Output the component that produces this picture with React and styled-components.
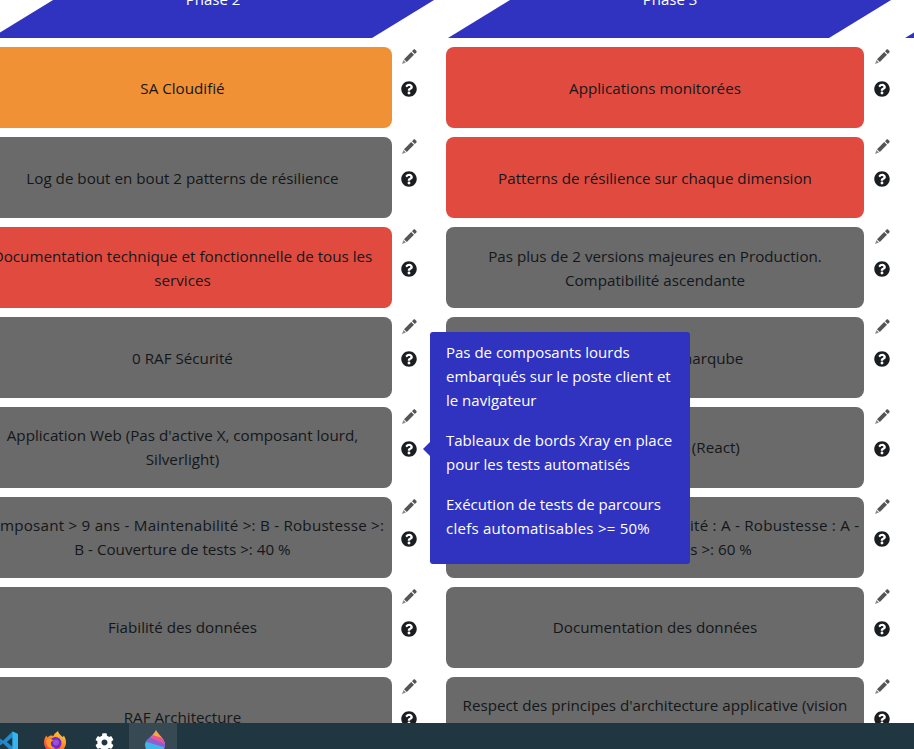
import React from "react";
import styled, { createGlobalStyle } from "styled-components";
import { FaQuestionCircle, FaCog } from "react-icons/fa";

const GlobalStyle = createGlobalStyle`
  html, body {
    margin: 0;
    padding: 0;
    background: #fff;
    font-family: "Open Sans", "Noto Sans", sans-serif;
    overflow: hidden;
  }
`;

const Page = styled.div`
  height: 100vh;
  display: flex;
  flex-direction: column;
  overflow: hidden;
`;

const Viewport = styled.div`
  position: relative;
  flex: 1;
  min-height: 0;
  overflow: hidden;
`;

const Board = styled.div`
  margin-top: -22px;
`;

const PhaseRow = styled.div`
  display: flex;
  margin-left: -9px;
  width: 1400px;
`;

const Phase = styled.div`
  position: relative;
  flex: 0 0 457px;
  height: 60px;
  box-sizing: border-box;
  padding: 9px 13px 0 0;
  text-align: center;
  color: #fff;
  font-size: 15px;
  line-height: 24px;

  &::before {
    content: "";
    position: absolute;
    top: 0;
    left: 0;
    width: 479px;
    height: 60px;
    background: #3033c0;
    clip-path: polygon(98px 0, 479px 0, 381px 100%, 0 100%);
  }
`;

const PhaseLabel = styled.span`
  position: relative;
`;

const Columns = styled.div`
  display: flex;
  margin: 9.4px 0 0 -26.5px;
  width: 1000px;
`;

const Column = styled.div`
  flex: 0 0 472.5px;
  display: flex;
  flex-direction: column;
  gap: 9px;
`;

const Row = styled.div`
  display: flex;
`;

const colors = {
  grey: "#6a6a6a",
  orange: "#f09135",
  red: "#e14b3f",
};

const Card = styled.div`
  flex: 0 0 418px;
  height: 80.9px;
  border-radius: 8px;
  background: ${(p) => colors[p.$tone]};
  color: #14171a;
  font-size: 15.2px;
  line-height: 24px;
  display: flex;
  flex-direction: column;
  align-items: center;
  justify-content: center;
  overflow: hidden;
`;

const Line = styled.span`
  display: block;
  white-space: nowrap;
  letter-spacing: ${(p) => p.$spread}px;
`;

const Actions = styled.div`
  margin-left: 9.5px;
  width: 16px;
  display: flex;
  flex-direction: column;
  align-items: center;
  padding-top: 2px;
  gap: 16px;
`;

const EditSvg = styled.svg`
  width: 16px;
  height: 16px;
  fill: #555;
`;

const HelpIcon = styled(FaQuestionCircle)`
  width: 16px;
  height: 16px;
  color: #1b1e21;
`;

const Tooltip = styled.div`
  position: absolute;
  top: 332px;
  left: 430px;
  width: 260px;
  box-sizing: border-box;
  padding: 8px 16px;
  border-radius: 3px;
  background: #3033c0;
  color: #fff;
  font-size: 15px;
  line-height: 24px;

  &::before {
    content: "";
    position: absolute;
    left: -7px;
    top: 110px;
    border-style: solid;
    border-width: 7px 7px 7px 0;
    border-color: transparent #3033c0 transparent transparent;
  }
`;

const TipText = styled.p`
  margin: 0 0 16px;
`;

const Taskbar = styled.div`
  flex: 0 0 26px;
  display: flex;
  background: #203640;
  overflow: hidden;
`;

const Tile = styled.div`
  flex: 0 0 48px;
  height: 26px;
  display: flex;
  padding: 7px 0 0 ${(p) => p.$inset}px;
  box-sizing: border-box;
  background: ${(p) => (p.$active ? "#374a54" : "transparent")};
  margin-left: ${(p) => (p.$first ? "-15px" : "0")};
`;

const GearIcon = styled(FaCog)`
  width: 19px;
  height: 19px;
  margin-top: 3px;
  color: #fff;
`;

const phases = ["Phase 2", "Phase 3", "Phase 4"];

const left = [
  { tone: "orange", lines: ["SA Cloudifié"] },
  { tone: "grey", lines: ["Log de bout en bout 2 patterns de résilience"] },
  { tone: "red", lines: ["Documentation technique et fonctionnelle de tous les", "services"] },
  { tone: "grey", lines: ["0 RAF Sécurité"] },
  { tone: "grey", lines: ["Application Web (Pas d'active X, composant lourd,", "Silverlight)"] },
  { tone: "grey", lines: ["Composant > 9 ans - Maintenabilité >: B - Robustesse >:", "B - Couverture de tests >: 40 %"] },
  { tone: "grey", lines: ["Fiabilité des données"] },
  { tone: "grey", lines: ["RAF Architecture"] },
];

const right = [
  { tone: "red", lines: ["Applications monitorées"] },
  { tone: "red", lines: ["Patterns de résilience sur chaque dimension"] },
  { tone: "grey", lines: ["Pas plus de 2 versions majeures en Production.", "Compatibilité ascendante"] },
  { tone: "grey", lines: ["Quality Gates Sonarqube"] },
  { tone: "grey", lines: ["Socle Web à jour (React)"] },
  { tone: "grey", lines: ["Composant > 9 ans - Maintenabilité : A - Robustesse : A -", "Couverture de tests >: 60 %"] },
  { tone: "grey", lines: ["Documentation des données"] },
  { tone: "grey", lines: ["Respect des principes d'architecture applicative (vision", "transverse)"] },
];

const tips = [
  ["Pas de composants lourds", "embarqués sur le poste client et", "le navigateur"],
  ["Tableaux de bords Xray en place", "pour les tests automatisés"],
  ["Exécution de tests de parcours", "clefs automatisables >= 50%"],
];

function spreadOf(line) {
  if (line.includes(">=")) return 0.25;
  if (line.includes(" - ") && line.length > 40) return 0.22;
  return 0;
}

function Lines({ lines }) {
  return lines.map((l) => (
    <Line key={l} $spread={spreadOf(l)}>
      {l}
    </Line>
  ));
}

function EditIcon() {
  return (
    <EditSvg viewBox="0 0 16 16">
      <path d="M3 10.200 10.200 3 13 5.800 5.800 13z" />
      <path d="M11 2.200 12.600.6c.4-.4 1-.4 1.400 0l1.400 1.400c.4.4.4 1 0 1.400L13.800 5z" />
      <path fill="#8a8a8a" d="M2.500 11 5 13.500 1 15z" />
    </EditSvg>
  );
}

function Item({ tone, lines }) {
  return (
    <Row>
      <Card $tone={tone}>
        <Lines lines={lines} />
      </Card>
      <Actions>
        <EditIcon />
        <HelpIcon />
      </Actions>
    </Row>
  );
}

function VsCode() {
  return (
    <svg width="24" height="24" viewBox="0 0 24 24">
      <path fill="#2489ca" d="M1 8.700 3 7l5 3.800L17.500 1.500 23 4v16l-5.500 2.500L8 13.200 3 17l-2-1.700L5.700 12z" />
      <path fill="#1f3640" d="M17.500 7.300 11.800 12l5.700 4.700z" />
      <path fill="#35b5f0" d="M17.500 1.500 23 4v16l-5.500 2.500z" />
    </svg>
  );
}

function Firefox() {
  return (
    <svg width="24" height="24" viewBox="0 0 24 24">
      <defs>
        <linearGradient id="ff" x1="0.8" y1="0" x2="0.2" y2="1">
          <stop offset="0" stopColor="#ffd23a" />
          <stop offset="0.45" stopColor="#ff8a2b" />
          <stop offset="1" stopColor="#f0304f" />
        </linearGradient>
      </defs>
      <path fill="url(#ff)" d="M15 1c.5 3 3 4 4.500 6 .8-.3 1-.8 1.200-1.500C22.500 8 23 10 23 12.500 23 18.500 18 23 12 23S1 18.500 1 12.500c0-2.500.8-5 2.500-7 .2 1 .7 1.700 1.300 2C6.500 5 9 5.500 10.500 6c.5-2 2.500-3.500 4.500-5z" />
      <circle cx="12.500" cy="13" r="6" fill="#6a2bc8" />
      <path fill="#ff9a2b" d="M3.500 10c2-1.500 5-1.500 7 .5-2 .5-3 1.500-2.500 4 .5 2 2.500 3.500 5 3.500-3 1.500-6.500.5-8.500-2-1.200-1.800-1.500-4-1-6z" />
      <circle cx="13" cy="12.500" r="3" fill="#9b4fe0" />
    </svg>
  );
}

function PaintDrop() {
  return (
    <svg width="24" height="24" viewBox="0 0 24 24">
      <defs>
        <clipPath id="drop">
          <path d="M13 0c1 4 9 8 9 15 0 5-4.500 9-10 9S2 20 2 15C2 9 10 7 13 0z" />
        </clipPath>
      </defs>
      <g clipPath="url(#drop)">
        <rect width="24" height="24" fill="#3fb8e8" />
        <path fill="#8f5fd0" d="M0 11 24 18V10L10 5z" />
        <path fill="#e9559b" d="M6 7 24 15V7L13 0z" />
        <path fill="#f7a93b" d="M9 5 20 8 13 0z" />
      </g>
    </svg>
  );
}

export default function App() {
  return (
    <Page>
      <GlobalStyle />
      <Viewport>
        <Board>
          <PhaseRow>
            {phases.map((p) => (
              <Phase key={p}>
                <PhaseLabel>{p}</PhaseLabel>
              </Phase>
            ))}
          </PhaseRow>
          <Columns>
            <Column>
              {left.map((it, i) => (
                <Item key={i} {...it} />
              ))}
            </Column>
            <Column>
              {right.map((it, i) => (
                <Item key={i} {...it} />
              ))}
            </Column>
          </Columns>
        </Board>
        <Tooltip>
          {tips.map((t, i) => (
            <TipText key={i}>
              <Lines lines={t} />
            </TipText>
          ))}
        </Tooltip>
      </Viewport>
      <Taskbar>
        <Tile $first $inset={10}>
          <VsCode />
        </Tile>
        <Tile $inset={10}>
          <Firefox />
        </Tile>
        <Tile $inset={14}>
          <GearIcon />
        </Tile>
        <Tile $active $inset={14}>
          <PaintDrop />
        </Tile>
      </Taskbar>
    </Page>
  );
}
